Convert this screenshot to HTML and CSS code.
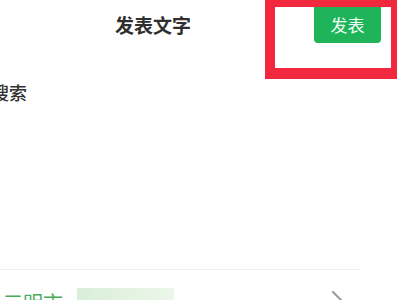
FILE: index.html
```html
<!DOCTYPE html>
<html lang="zh">
<head>
<meta charset="utf-8">
<link rel="stylesheet" href="styles.css">
</head>
<body>
<div class="page">
  <header class="header">
    <h1 class="title">发表文字</h1>
    <button class="publish">发表</button>
  </header>
  <div class="editor">
    <p class="placeholder">搜索</p>
  </div>
  <div class="divider"></div>
  <div class="location">
    <span class="city">三明市</span>
    <span class="tag"></span>
    <svg class="chevron" width="14" height="14" viewBox="0 0 14 14"><path d="M3 1 L11 9" stroke="#9a9a9a" stroke-width="2" fill="none" stroke-linecap="round"/></svg>
  </div>
  <div class="highlight"></div>
</div>
</body>
</html>
```
FILE: styles.css
```css
* { box-sizing: border-box; }
html, body { margin: 0; padding: 0; background: #fff; }
body {
  width: 400px; height: 300px; overflow: hidden;
  font-family: "Noto Sans CJK SC", "Noto Sans", sans-serif;
  color: #2e2e2e;
}
.page { position: relative; display: flex; flex-direction: column; height: 300px; }
.page > * { flex-shrink: 0; }
.header { display: flex; align-items: flex-start; height: 50px; }
.title {
  margin: 12px 0 0 115px; font-size: 19px; line-height: 26px;
  font-weight: 600; color: #2f2f2f; letter-spacing: 0;
}
.publish {
  margin: 6px 19px 0 auto; width: 67px; height: 37px;
  border: none; border-radius: 0 0 4px 4px; background: #1fb45a;
  color: #f2fff6; font-family: inherit; font-size: 17px; padding: 0;
}
.editor { height: 219px; padding-top: 30px; }
.placeholder { margin: 0 0 0 -9px; font-size: 18px; line-height: 24px; color: #333; font-weight: 500; }
.divider { height: 1px; width: 360px; background: #efefef; }
.location { display: flex; align-items: flex-start; padding-top: 18px; }
.city { margin: 2px 0 0 3px; font-size: 20px; line-height: 26px; color: #4aac58; letter-spacing: 0; }
.tag {
  width: 97px; height: 14px; margin-left: 14px;
  background: linear-gradient(90deg, #d9efd8, #ecf7ea);
}
.chevron { margin: 3px 0 0 auto; margin-right: 56px; }
.highlight {
  position: absolute; left: 265px; top: 0; width: 132px; height: 79px;
  border-style: solid; border-color: #f2283f;
  border-width: 7px 6px 11px 10px;
}
```
